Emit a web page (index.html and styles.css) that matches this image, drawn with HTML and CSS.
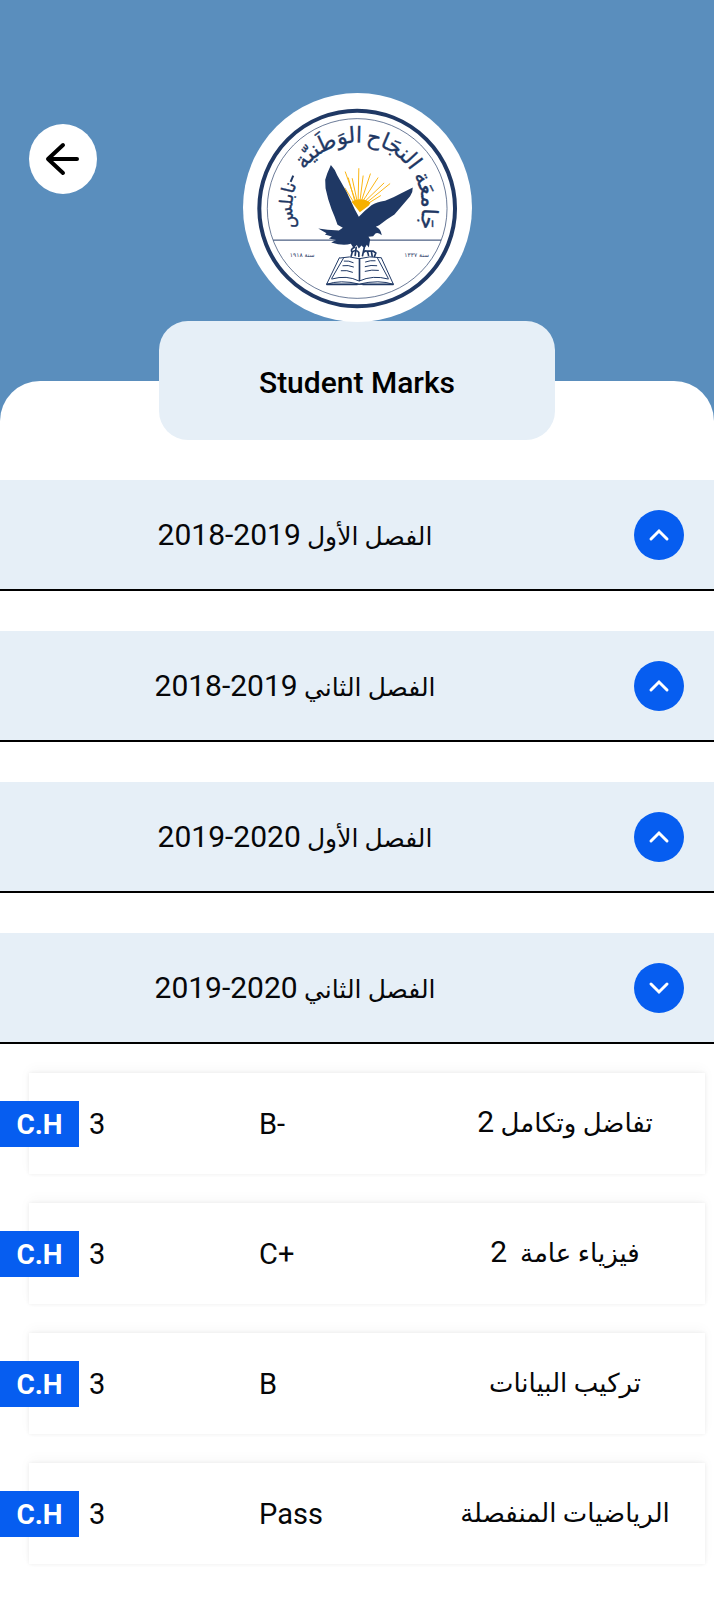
FILE: index.html
```html
<!DOCTYPE html>
<html lang="en">
<head>
<meta charset="utf-8">
<meta name="viewport" content="width=device-width, initial-scale=1">
<title>Student Marks</title>
<link rel="stylesheet" href="styles.css">
</head>
<body>
<header class="hero">
  <button class="back" type="button" aria-label="Back">
    <svg class="back-icon" viewBox="0 0 36 36" aria-hidden="true"><path d="M32 18H4M18 4 3 18l15 14"/></svg>
  </button>
  <svg class="logo" viewBox="38 22 688 688" role="img" aria-label="جامعة النجاح الوطنية - نابلس">
    <defs><path id="arc" d="M193 418A195 195 0 1 1 569 418"/></defs>
    <circle cx="382" cy="366" r="344" fill="#fff"/>
    <circle cx="381" cy="369" r="294" fill="none" stroke="#1f3864" stroke-width="12"/>
    <circle cx="381" cy="369" r="270" fill="none" stroke="#1f3864" stroke-width="2"/>
    <path d="M129 464H633" stroke="#1f3864" stroke-width="3"/>
    <text class="logo-text logo-city" text-anchor="middle"><textPath href="#arc" startOffset="8%">نابلس</textPath></text>
    <path d="M181 289 189 270" stroke="#1f3864" stroke-width="6"/>
    <text class="logo-text" text-anchor="middle"><textPath href="#arc" startOffset="38%">الوَطَنيّة</textPath></text>
    <text class="logo-text" text-anchor="middle"><textPath href="#arc" startOffset="65%">النجَاح</textPath></text>
    <text class="logo-text" text-anchor="middle"><textPath href="#arc" startOffset="90%">جَامعَة</textPath></text>
    <text class="logo-date" x="216" y="516" text-anchor="middle">سنة ١٩١٨</text>
    <text class="logo-date" x="560" y="516" text-anchor="middle">سنة ١٣٣٧</text>
    <g stroke="#fbb614" stroke-width="3">
      <path d="M376 346 345 258M380 343 366 278M384 342 386 248M390 342 399 270M395 343 421 264M400 344 444 276M405 347 462 292M411 350 480 294M368 346 344 307M415 353 452 330M373 344 354 276"/>
    </g>
    <path d="M364 349Q374 340 387 341Q409 340 421 352L416 360 389 380Z" fill="#f7b000"/>
    <path fill="#1f3864" d="M302 238Q314 250 321 269L349 319 374 372 386 394Q402 376 424 359Q439 350 465 346Q489 337 512 324L548 306Q549 319 540 332L524 351 513 364 493 387 470 402 447 419 437 424Q452 430 455 449Q443 440 436 444L429 452 415 454 420 462 416 486 410 478 403 489 394 480 386 489 380 479 370 488 362 475Q339 483 303 471L318 464 296 459 305 453 284 447 289 443 264 429 292 433 326 435 338 427 322 418 313 393 304 371 294 341 286 308 285 283 291 264Z"/>
    <g fill="none" stroke="#1f3864" stroke-width="5" stroke-linecap="round">
      <path d="M372 486Q360 491 366 501L363 512M378 486 375 510M366 500Q379 490 386 501V513M402 488 397 511M402 499Q412 490 415 510M412 497H429L437 503 433 513M424 499 426 512"/>
    </g>
    <g fill="none" stroke="#1f3864" stroke-width="3">
      <path d="M328 516 289 597H490L453 516M328 518Q358 510 387 520Q418 510 453 517M340 518 304 580M442 518 475 580M304 581Q350 568 387 587Q428 568 475 581M289 597Q330 582 387 596Q448 582 490 597"/>
      <path d="M388 518V587" stroke-width="5"/>
      <path d="M289 597H382M397 597H490" stroke-width="5"/>
      <path d="M341 527Q356 525 370 532M337 541Q354 538 371 545M332 556Q350 553 368 561M405 530Q421 524 436 526M404 544Q423 538 441 541M404 558Q425 552 446 555"/>
    </g>
  </svg>
</header>
<main class="sheet">
  <h1 class="page-title">Student Marks</h1>
  <div class="terms">
    <section class="term">
      <h2 class="term-title" lang="ar" dir="rtl">الفصل الأول <bdi class="latin" dir="ltr">2018-2019</bdi></h2>
      <button class="toggle" type="button" aria-label="Expand" aria-expanded="false"><svg viewBox="0 0 50 50" aria-hidden="true"><path d="M17 29 25 21 33 29"/></svg></button>
    </section>
    <section class="term">
      <h2 class="term-title" lang="ar" dir="rtl">الفصل الثاني <bdi class="latin" dir="ltr">2018-2019</bdi></h2>
      <button class="toggle" type="button" aria-label="Expand" aria-expanded="false"><svg viewBox="0 0 50 50" aria-hidden="true"><path d="M17 29 25 21 33 29"/></svg></button>
    </section>
    <section class="term">
      <h2 class="term-title" lang="ar" dir="rtl">الفصل الأول <bdi class="latin" dir="ltr">2019-2020</bdi></h2>
      <button class="toggle" type="button" aria-label="Expand" aria-expanded="false"><svg viewBox="0 0 50 50" aria-hidden="true"><path d="M17 29 25 21 33 29"/></svg></button>
    </section>
    <section class="term">
      <h2 class="term-title" lang="ar" dir="rtl">الفصل الثاني <bdi class="latin" dir="ltr">2019-2020</bdi></h2>
      <button class="toggle" type="button" aria-label="Collapse" aria-expanded="true"><svg viewBox="0 0 50 50" aria-hidden="true"><path d="M17 21 25 29 33 21"/></svg></button>
    </section>
  </div>
  <ul class="courses">
    <li class="course">
      <div class="hours"><span class="tag">C.H</span><span>3</span></div>
      <span>B-</span>
      <span class="name" lang="ar" dir="rtl">تفاضل وتكامل <span class="latin">2</span></span>
    </li>
    <li class="course">
      <div class="hours"><span class="tag">C.H</span><span>3</span></div>
      <span>C+</span>
      <span class="name" lang="ar" dir="rtl">فيزياء عامة&nbsp; <span class="latin">2</span></span>
    </li>
    <li class="course">
      <div class="hours"><span class="tag">C.H</span><span>3</span></div>
      <span>B</span>
      <span class="name" lang="ar" dir="rtl">تركيب البيانات</span>
    </li>
    <li class="course">
      <div class="hours"><span class="tag">C.H</span><span>3</span></div>
      <span>Pass</span>
      <span class="name" lang="ar" dir="rtl">الرياضيات المنفصلة</span>
    </li>
  </ul>
</main>
</body>
</html>
```
FILE: styles.css
```css
* {
  box-sizing: border-box;
}

body {
  margin: 0;
  background: #fff;
  color: #060709;
  font-family: Roboto, "DejaVu Sans", sans-serif;
  font-size: 29px;
  line-height: 36px;
}

button {
  border: 0;
  padding: 0;
  cursor: pointer;
}

.hero {
  display: grid;
  grid-template-columns: 1fr auto 1fr;
  align-items: start;
  padding: 93px 29px 100px;
  background: #5a8ebd;
}

.back {
  display: grid;
  place-items: center;
  width: 68px;
  height: 70px;
  margin-top: 31px;
  border-radius: 50%;
  background: #fff;
}

.back-icon {
  width: 36px;
  height: 36px;
  fill: none;
  stroke: #000;
  stroke-width: 4;
  stroke-linecap: round;
  stroke-linejoin: round;
}

.logo {
  display: block;
  width: 229px;
  height: 229px;
}

.logo-text {
  fill: #1f3864;
  stroke: #1f3864;
  stroke-width: 1;
  font-family: "DejaVu Sans", sans-serif;
  font-size: 66px;
}

.logo-city {
  font-size: 54px;
}

.logo-date {
  fill: #1f3864;
  font-family: "DejaVu Sans", sans-serif;
  font-size: 18px;
}

/* The title card straddles the hero and the sheet's rounded top edge. */
.sheet {
  display: flow-root;
  margin-top: -41px;
  border-radius: 40px 40px 0 0;
  background: #fff;
}

.page-title {
  display: grid;
  place-items: center;
  width: 396px;
  max-width: 80%;
  height: 119px;
  margin: -60px auto 40px;
  padding-top: 4px;
  border-radius: 29px;
  background: #e6eff7;
  color: #000;
  font-size: 30px;
  font-weight: 500;
}

.terms {
  display: grid;
  gap: 40px;
}

.term {
  display: flex;
  align-items: center;
  gap: 44px;
  height: 111px;
  padding-right: 30px;
  border-bottom: 2px solid #000;
  background: #e6eff7;
}

.term-title {
  flex: 1;
  margin: 0;
  padding-top: 2px;
  font-size: 25px;
  font-weight: 400;
  text-align: center;
}

.latin {
  font-size: 30px;
}

.toggle {
  width: 50px;
  height: 50px;
  border-radius: 50%;
  background: #065df0;
}

.toggle svg {
  display: block;
  fill: none;
  stroke: #fff;
  stroke-width: 3;
  stroke-linecap: round;
}

.courses {
  display: grid;
  gap: 29px;
  margin: 0;
  padding: 29px 9px 35px 29px;
  list-style: none;
}

.course {
  display: grid;
  grid-template-columns: 230fr 166fr 280fr;
  align-items: center;
  height: 101px;
  background: #fff;
  box-shadow: 0 0 4px rgba(0, 20, 20, 0.07), 0 -4px 12px rgba(0, 40, 30, 0.03);
}

.hours {
  display: flex;
  align-items: center;
  gap: 10px;
  margin-left: -29px;
}

.tag {
  width: 79px;
  padding: 6px 0 4px;
  background: #065df0;
  color: #fff;
  font-size: 28px;
  font-weight: 700;
  text-align: center;
}

.name {
  padding-bottom: 2px;
  font-size: 26px;
  text-align: center;
}
```
